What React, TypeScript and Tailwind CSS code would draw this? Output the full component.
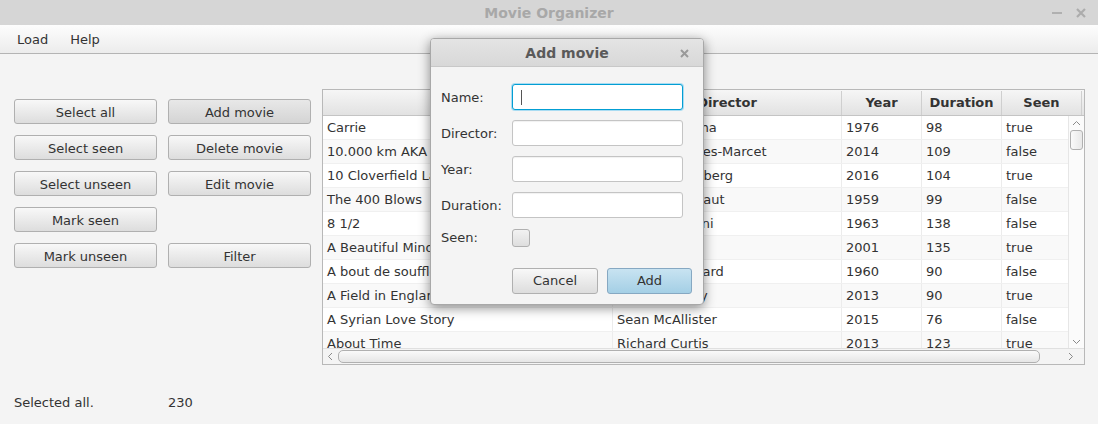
import React from 'react';

const movies = [
  ['Carrie', 'Brian De Palma', '1976', '98', 'true'],
  ['10.000 km AKA Long Distance', 'Carlos Marques-Marcet', '2014', '109', 'false'],
  ['10 Cloverfield Lane', 'Dan Trachtenberg', '2016', '104', 'true'],
  ['The 400 Blows', 'François Truffaut', '1959', '99', 'false'],
  ['8 1/2', 'Federico Fellini', '1963', '138', 'false'],
  ['A Beautiful Mind', 'Ron Howard', '2001', '135', 'true'],
  ['A bout de souffle', 'Jean-Luc Godard', '1960', '90', 'false'],
  ['A Field in England', 'Ben Wheatley', '2013', '90', 'true'],
  ['A Syrian Love Story', 'Sean McAllister', '2015', '76', 'false'],
  ['About Time', 'Richard Curtis', '2013', '123', 'true'],
];

const leftButtons = [
  ['Select all', 'Add movie'],
  ['Select seen', 'Delete movie'],
  ['Select unseen', 'Edit movie'],
  ['Mark seen', ''],
  ['Mark unseen', 'Filter'],
];

function FxButton({ label, dark }: { label: string; dark?: boolean }) {
  return (
    <button
      className={`flex h-[25px] w-[143px] items-center justify-center rounded-[3px] border border-[#b0b0b0] pt-[2px] text-[13px] text-[#333] ${
        dark
          ? 'bg-gradient-to-b from-[#e8e8e8] to-[#d4d4d4]'
          : 'bg-gradient-to-b from-[#f8f8f8] to-[#dddddd]'
      }`}
    >
      {label}
    </button>
  );
}

function Chevron({ dir }: { dir: 'up' | 'down' | 'left' | 'right' }) {
  const pts = {
    up: '1,6 4.5,2.5 8,6',
    down: '1,3 4.5,6.5 8,3',
    left: '6,1 2.5,4.5 6,8',
    right: '3,1 6.5,4.5 3,8',
  }[dir];
  return (
    <svg width="9" height="9" viewBox="0 0 9 9">
      <polyline points={pts} fill="none" stroke="#8a8a8a" strokeWidth="1" />
    </svg>
  );
}

function Field({ focused }: { focused?: boolean }) {
  return (
    <div
      className={`relative h-[26px] w-[171px] rounded-[3px] bg-white ${
        focused
          ? 'border border-[#039ed3] shadow-[0_0_0_1px_#a9dcf2]'
          : 'border border-[#c4c4c4] shadow-[inset_0_1px_1px_rgba(0,0,0,0.06)]'
      }`}
    >
      {focused && <div className="absolute left-[8px] top-[5px] h-[15px] w-px bg-[#555]" />}
    </div>
  );
}

export default function App() {
  return (
    <div className="relative h-[424px] w-[1098px] overflow-hidden bg-[#f4f4f4] font-['DejaVu_Sans',sans-serif] text-[13px] text-[#333]">
      {/* window title bar */}
      <div className="relative flex h-[25px] items-center justify-center bg-[#d6d6d6]">
        <span className="pt-[1px] text-[14px] font-bold text-[#a8a8a8]">Movie Organizer</span>
        <div className="absolute right-[12px] top-0 flex h-[25px] items-center gap-[14px]">
          <div className="h-[2px] w-[10px] bg-[#b0b0b0]" />
          <svg width="10" height="10" viewBox="0 0 10 10">
            <path d="M1 1L9 9M9 1L1 9" stroke="#acacac" strokeWidth="2.2" />
          </svg>
        </div>
      </div>

      {/* menu bar */}
      <div className="flex h-[29px] items-center gap-[22px] border-b border-[#b4b4b4] bg-gradient-to-b from-[#fdfdfd] to-[#ececec] pl-[17px] pt-[2px]">
        <span>Load</span>
        <span>Help</span>
      </div>

      {/* main area */}
      <div className="flex pt-[35px]">
        <div className="w-[322px] pl-[14px] pt-[10px]">
          <div className="grid grid-cols-[143px_143px] gap-x-[11px] gap-y-[11px]">
            {leftButtons.map(([a, b]) => (
              <React.Fragment key={a}>
                <FxButton label={a} />
                {b ? <FxButton label={b} dark={b === 'Add movie'} /> : <div />}
              </React.Fragment>
            ))}
          </div>
        </div>

        {/* table */}
        <div className="h-[276px] w-[763px] border border-[#b8b8b8] bg-white">
          <div className="flex h-[26px] border-b border-[#c4c4c4] bg-gradient-to-b from-[#f6f6f6] to-[#e2e2e2] pt-[1px] font-bold">
            <div className="flex w-[290px] items-center justify-center border-r border-[#cfcfcf]">Name</div>
            <div className="flex w-[229px] items-center justify-center border-r border-[#cfcfcf]">Director</div>
            <div className="flex w-[80px] items-center justify-center border-r border-[#cfcfcf]">Year</div>
            <div className="flex w-[80px] items-center justify-center border-r border-[#cfcfcf]">Duration</div>
            <div className="flex w-[80px] items-center justify-center border-r border-[#cfcfcf]">Seen</div>
          </div>
          <div className="flex h-[232px]">
            <div className="w-[745px] overflow-hidden">
              {movies.map((m, i) => (
                <div
                  key={m[0]}
                  className={`flex h-[24px] border-b border-[#f0f0f0] ${i % 2 ? 'bg-[#f9f9f9]' : 'bg-white'}`}
                >
                  <div className="flex w-[290px] items-center overflow-hidden whitespace-nowrap border-r border-[#ececec] pl-[4px]">{m[0]}</div>
                  <div className="flex w-[229px] items-center overflow-hidden whitespace-nowrap border-r border-[#ececec] pl-[4px]">{m[1]}</div>
                  <div className="flex w-[80px] items-center border-r border-[#ececec] pl-[4px]">{m[2]}</div>
                  <div className="flex w-[80px] items-center border-r border-[#ececec] pl-[4px]">{m[3]}</div>
                  <div className="flex w-[66px] items-center pl-[4px]">{m[4]}</div>
                </div>
              ))}
            </div>
            {/* vertical scrollbar */}
            <div className="flex w-[16px] flex-col items-center border-l border-[#e6e6e6] bg-[#fbfbfb]">
              <div className="flex h-[14px] items-center justify-center"><Chevron dir="up" /></div>
              <div className="h-[20px] w-[13px] rounded-[3px] border border-[#b0b0b0] bg-gradient-to-r from-[#fafafa] to-[#e8e8e8]" />
              <div className="flex-1" />
              <div className="flex h-[14px] items-center justify-center"><Chevron dir="down" /></div>
            </div>
          </div>
          {/* horizontal scrollbar */}
          <div className="flex h-[16px] items-center border-t border-[#e0e0e0] bg-[#f4f4f4]">
            <div className="flex w-[15px] items-center justify-center"><Chevron dir="left" /></div>
            <div className="h-[13px] w-[702px] rounded-[5px] border border-[#b0b0b0] bg-gradient-to-b from-[#fafafa] to-[#e6e6e6]" />
            <div className="flex-1" />
            <div className="flex w-[28px] items-center justify-center"><Chevron dir="right" /></div>
          </div>
        </div>
      </div>

      {/* status line */}
      <div className="flex pl-[14px] pt-[28px]">
        <span className="w-[154px]">Selected all.</span>
        <span>230</span>
      </div>

      {/* add movie dialog */}
      <div className="absolute left-[430px] top-[38px] h-[267px] w-[274px] overflow-hidden rounded-[4px] border border-[#a8a8a8] bg-[#f4f4f4] shadow-[0_3px_12px_rgba(0,0,0,0.45)]">
        <div className="relative flex h-[28px] items-center justify-center border-b border-[#c8c8c8] bg-gradient-to-b from-[#e4e4e4] to-[#d8d8d8] pt-[1px]">
          <span className="text-[14px] font-bold text-[#5a5a5a]">Add movie</span>
          <svg className="absolute right-[14px] top-[10px]" width="9" height="9" viewBox="0 0 9 9">
            <path d="M1 1L8 8M8 1L1 8" stroke="#9a9a9a" strokeWidth="2" />
          </svg>
        </div>
        <div className="flex flex-col gap-[10px] pl-[10px] pt-[17px]">
          {['Name:', 'Director:', 'Year:', 'Duration:'].map((l, i) => (
            <div key={l} className="flex items-center">
              <span className="w-[71px] pt-[1px]">{l}</span>
              <Field focused={i === 0} />
            </div>
          ))}
          <div className="flex items-center">
            <span className="w-[71px]">Seen:</span>
            <div className="h-[18px] w-[18px] rounded-[3px] border border-[#b0b0b0] bg-gradient-to-b from-[#f2f2f2] to-[#dedede]" />
          </div>
          <div className="mt-[10px] flex gap-[9px] pl-[71px]">
            <button className="flex h-[26px] w-[86px] items-center justify-center rounded-[3px] border border-[#b0b0b0] bg-gradient-to-b from-[#f8f8f8] to-[#dddddd] text-[#333]">
              Cancel
            </button>
            <button className="flex h-[26px] w-[85px] items-center justify-center rounded-[3px] border border-[#86a8c2] bg-gradient-to-b from-[#c8e3f1] to-[#a4cfe5] text-[#333]">
              Add
            </button>
          </div>
        </div>
      </div>
    </div>
  );
}
